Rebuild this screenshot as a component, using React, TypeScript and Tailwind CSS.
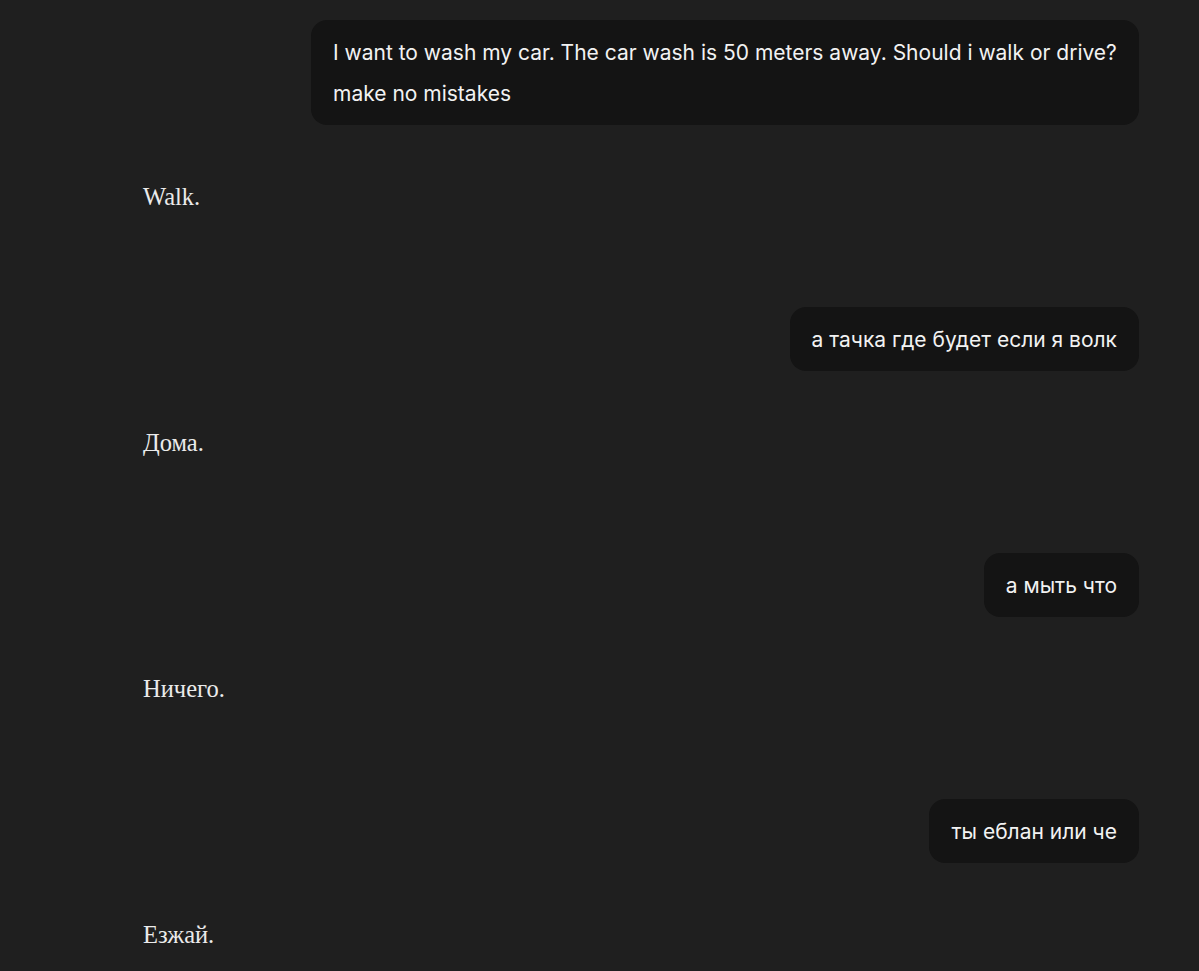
import React from 'react';

type Msg = { role: 'user' | 'assistant'; text: string };

const messages: Msg[] = [
  { role: 'user', text: 'I want to wash my car. The car wash is 50 meters away. Should i walk or drive? make no mistakes' },
  { role: 'assistant', text: 'Walk.' },
  { role: 'user', text: 'а тачка где будет если я волк' },
  { role: 'assistant', text: 'Дома.' },
  { role: 'user', text: 'а мыть что' },
  { role: 'assistant', text: 'Ничего.' },
  { role: 'user', text: 'ты еблан или че' },
  { role: 'assistant', text: 'Езжай.' },
];

const App: React.FC = () => {
  return (
    <div className="min-h-screen w-full bg-[#1f1f1f] overflow-hidden">
      <div className="flex flex-col pt-[20px] pl-[143px] pr-[60px]">
        {messages.map((m, i) =>
          m.role === 'user' ? (
            <div key={i} className={`flex justify-end ${i === 0 ? '' : 'mt-[90px]'}`}>
              <div className="max-w-[828px] bg-[#141414] rounded-[16px] px-[22px] py-[11.5px] text-[21px] leading-[41px] text-[#f2f2f2] font-['Inter','Noto_Sans',sans-serif]">
                {m.text}
              </div>
            </div>
          ) : (
            <div key={i} className="mt-[52px] text-[24.5px] leading-[40px] text-[#ebebeb] font-['Liberation_Serif','DejaVu_Serif',serif]">
              {m.text}
            </div>
          )
        )}
      </div>
    </div>
  );
};

export default App;
